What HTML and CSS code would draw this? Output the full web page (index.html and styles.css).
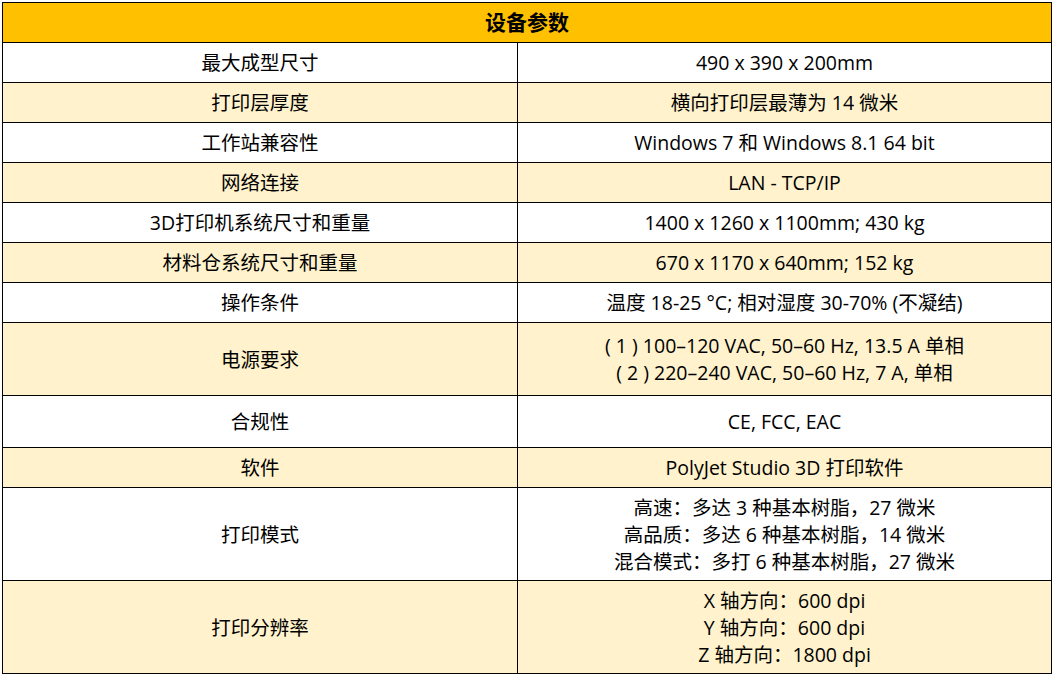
FILE: index.html
```html
<!DOCTYPE html>
<html lang="zh-CN">
<head>
<meta charset="utf-8">
<title>设备参数</title>
<link rel="stylesheet" href="styles.css">
</head>
<body>
<table class="spec">
  <colgroup>
    <col class="col-key">
    <col class="col-val">
  </colgroup>
  <thead>
    <tr class="h40 head"><th colspan="2">设备参数</th></tr>
  </thead>
  <tbody>
    <tr class="h40 white"><td>最大成型尺寸</td><td>490 x 390 x 200mm</td></tr>
    <tr class="h40 gold"><td>打印层厚度</td><td>横向打印层最薄为 14 微米</td></tr>
    <tr class="h40 white"><td>工作站兼容性</td><td>Windows 7 和 Windows 8.1 64 bit</td></tr>
    <tr class="h40 gold"><td>网络连接</td><td>LAN - TCP/IP</td></tr>
    <tr class="h40 white"><td>3D打印机系统尺寸和重量</td><td>1400 x 1260 x 1100mm; 430 kg</td></tr>
    <tr class="h40 gold"><td>材料仓系统尺寸和重量</td><td>670 x 1170 x 640mm; 152 kg</td></tr>
    <tr class="h40 white"><td>操作条件</td><td>温度 18-25 °C; 相对湿度 30-70% (不凝结)</td></tr>
    <tr class="h73 gold"><td>电源要求</td><td>( 1 ) 100–120 VAC, 50–60 Hz, 13.5 A 单相<br>( 2 ) 220–240 VAC, 50–60 Hz, 7 A, 单相</td></tr>
    <tr class="h52 white"><td>合规性</td><td>CE, FCC, EAC</td></tr>
    <tr class="h40 gold"><td>软件</td><td>PolyJet Studio 3D 打印软件</td></tr>
    <tr class="h93 white"><td>打印模式</td><td>高速：多达 3 种基本树脂，27 微米<br>高品质：多达 6 种基本树脂，14 微米<br>混合模式：多打 6 种基本树脂，27 微米</td></tr>
    <tr class="h93 gold"><td>打印分辨率</td><td>X 轴方向：600 dpi<br>Y 轴方向：600 dpi<br>Z 轴方向：1800 dpi</td></tr>
  </tbody>
</table>
</body>
</html>
```
FILE: styles.css
```css
html, body {
  margin: 0;
  padding: 0;
  background: #ffffff;
}

body {
  padding: 2px 0 0 2px;
  font-family: "Open Sans", "Noto Sans CJK SC", sans-serif;
  font-size: 19.5px;
  color: #000000;
}

.spec {
  border-collapse: collapse;
  width: 1049px;
  table-layout: fixed;
}

.col-key { width: 515px; }
.col-val { width: 534px; }

.spec th,
.spec td {
  border: 1px solid #000000;
  padding: 0;
  text-align: center;
  vertical-align: middle;
  line-height: 27px;
}

.spec th {
  font-size: 21px;
  font-weight: 700;
}

.head { background: #ffc000; }
.gold { background: #fff2cc; }
.white { background: #ffffff; }

.h40 { height: 40px; }
.h52 { height: 52px; }
.h73 { height: 73px; }
.h93 { height: 93px; }
```
